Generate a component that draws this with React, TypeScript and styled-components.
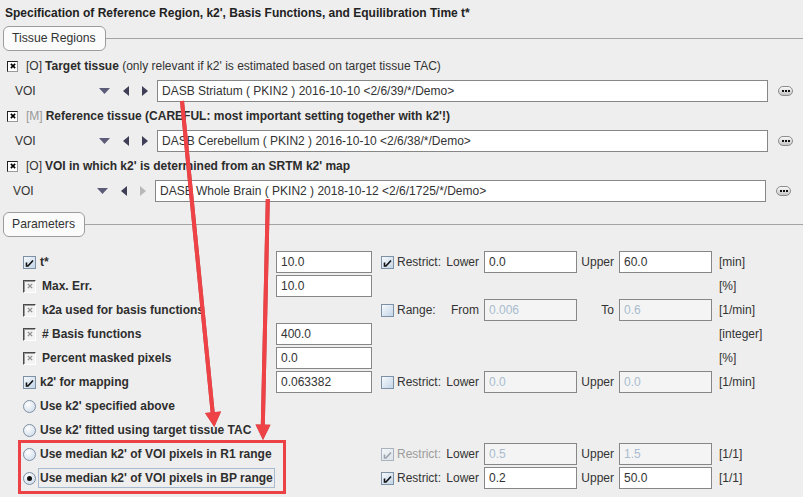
import React from 'react';
import styled, { createGlobalStyle, css } from 'styled-components';

type BoxKind = 'blue' | 'metal' | 'tissue' | 'faded';

const GlobalStyle = createGlobalStyle`
  html, body {
    margin: 0;
    padding: 0;
    background: #eeeeee;
  }
  body {
    font-family: "Liberation Sans", Arial, sans-serif;
    font-size: 12px;
    color: #333333;
  }
`;

const Page = styled.div`
  position: relative;
  width: 803px;
  height: 497px;
  overflow: hidden;
  background: #eeeeee;
`;

const Title = styled.div`
  height: 26px;
  line-height: 26px;
  padding-left: 5px;
  font-weight: bold;
  color: #222222;
  white-space: nowrap;
`;

const SectionHeader = styled.div<{ $top: number }>`
  display: flex;
  align-items: center;
  height: 25px;
  margin-top: ${(p) => p.$top}px;
  padding-left: 3px;
`;

const Tab = styled.div`
  box-sizing: border-box;
  height: 25px;
  line-height: 23px;
  padding: 0 9px 0 8px;
  border: 1px solid #9c9c9c;
  border-radius: 6px;
  background: #fbfbfb;
  font-size: 12.2px;
  color: #333333;
`;

const Rule = styled.div`
  flex: 1;
  height: 1px;
  background: #a4a4a4;
`;

const Section = styled.div<{ $top: number }>`
  display: flex;
  flex-direction: column;
  margin-top: ${(p) => p.$top}px;
`;

const LabelRow = styled.div`
  display: flex;
  align-items: center;
  height: 24px;
  padding-left: 7px;
  white-space: pre;
`;

const Tag = styled.span<{ $muted?: boolean }>`
  margin-left: 8px;
  margin-right: 3px;
  color: ${(p) => (p.$muted ? '#9a9a9a' : '#333333')};
`;

const Caption = styled.span`
  color: #333333;
`;

const Strong = styled.b`
  color: #2b2b2b;
`;

const VoiRow = styled.div<{ $inset: number }>`
  display: flex;
  align-items: center;
  height: 26px;
  padding-left: ${(p) => p.$inset}px;
`;

const VoiLabel = styled.span`
  width: 84px;
  flex: none;
`;

const Field = styled.div<{ $width: number; $disabled?: boolean }>`
  box-sizing: border-box;
  flex: none;
  width: ${(p) => p.$width}px;
  height: 22px;
  line-height: 20px;
  padding-left: 4px;
  border: 1px solid #878787;
  background: ${(p) => (p.$disabled ? '#f4f4f4' : '#ffffff')};
  color: ${(p) => (p.$disabled ? '#a9bccf' : '#333333')};
  white-space: nowrap;
  overflow: hidden;
`;

const IconSlot = styled.span<{ $w: number; $after: number }>`
  display: inline-flex;
  align-items: center;
  flex: none;
  width: ${(p) => p.$w}px;
  margin-right: ${(p) => p.$after}px;
`;

const DotsButton = styled.span`
  display: inline-flex;
  align-items: center;
  justify-content: center;
  gap: 1px;
  flex: none;
  box-sizing: border-box;
  width: 15px;
  height: 10px;
  margin-left: 10px;
  border: 1px solid #8c8c8c;
  border-radius: 5px;
  background: linear-gradient(#fafafa, #c4c4c4);
`;

const Dot = styled.span`
  width: 2px;
  height: 2px;
  background: #111111;
`;

const boxKinds = {
  blue: css`
    width: 13px;
    height: 13px;
    border: 1px solid #7d90a4;
    background: linear-gradient(135deg, #f6f9fc, #c3d5e8);
  `,
  metal: css`
    width: 13px;
    height: 13px;
    border: 1px solid;
    border-color: #4a4a4a #ffffff #ffffff #4a4a4a;
    box-shadow: inset 1px 1px 0 #9a9a9a;
    background: #f3f3f3;
  `,
  tissue: css`
    width: 11px;
    height: 11px;
    border: 1px solid;
    border-color: #222222 #9a9a9a #9a9a9a #222222;
    background: #ffffff;
  `,
  faded: css`
    width: 13px;
    height: 13px;
    border: 1px solid #a8b3be;
    background: linear-gradient(135deg, #f4f6f8, #dde3ea);
  `,
};

const Box = styled.span<{ $kind: BoxKind }>`
  display: inline-flex;
  align-items: center;
  justify-content: center;
  flex: none;
  box-sizing: border-box;
  ${(p) => boxKinds[p.$kind]}
`;

const Radio = styled.span<{ $on?: boolean }>`
  display: inline-flex;
  align-items: center;
  justify-content: center;
  flex: none;
  box-sizing: border-box;
  width: 13px;
  height: 13px;
  border: 1px solid #7d90a4;
  border-radius: 50%;
  background: radial-gradient(circle at 35% 30%, #ffffff, #c8d7e7);

  &::after {
    content: '';
    display: ${(p) => (p.$on ? 'block' : 'none')};
    width: 5px;
    height: 5px;
    border-radius: 50%;
    background: #111111;
  }
`;

const ParamList = styled.div`
  display: flex;
  flex-direction: column;
  margin-top: 13px;
`;

const ParamRow = styled.div`
  display: grid;
  grid-template-columns: 253px 105px 103px 93px 42px 93px auto;
  align-items: center;
  height: 24px;
  padding-left: 23px;
  white-space: nowrap;
`;

const LabelCell = styled.div<{ $gap: number }>`
  display: flex;
  align-items: center;
  gap: ${(p) => p.$gap}px;
  font-weight: bold;
  color: #2e2e2e;
`;

const Focus = styled.span`
  margin-left: -2px;
  padding: 2px 1px;
  line-height: 14px;
  border: 1px solid #a7bbd0;
`;

const OptionCell = styled.div`
  display: flex;
  align-items: center;
`;

const OptionText = styled.span<{ $faded?: boolean }>`
  margin-left: 3px;
  color: ${(p) => (p.$faded ? '#9c9c9c' : '#333333')};
`;

const BoundLabel = styled.span`
  margin-left: auto;
  padding-right: 5px;
  color: #333333;
`;

const Unit = styled.span`
  padding-left: 7px;
  color: #333333;
`;

const Highlight = styled.div`
  position: absolute;
  left: 18px;
  top: 440px;
  width: 268px;
  height: 54px;
  box-sizing: border-box;
  border: 3px solid #ec4145;
  pointer-events: none;
`;

const ArrowLayer = styled.svg`
  position: absolute;
  left: 0;
  top: 0;
  pointer-events: none;
  filter: drop-shadow(0 0 0.6px rgba(150, 20, 20, 0.7));
`;

const CheckMark = ({ color = '#111111' }: { color?: string }) => (
  <svg width="9" height="9" viewBox="0 0 9 9">
    <path d="M1.5 4.5 V8 H3 L8 2.5" fill="none" stroke={color} strokeWidth="1.6" />
  </svg>
);

const XMark = ({ color, size, weight }: { color: string; size: number; weight: number }) => (
  <svg width={size} height={size} viewBox="0 0 7 7">
    <path d="M1 1 L6 6 M6 1 L1 6" stroke={color} strokeWidth={weight} />
  </svg>
);

const TriangleDown = () => (
  <svg width="11" height="6" viewBox="0 0 11 6">
    <path d="M0 0 H11 L5.5 6 Z" fill="#5c5c78" />
  </svg>
);

const TriangleSide = ({ dir, muted }: { dir: 'left' | 'right'; muted?: boolean }) => (
  <svg width="6" height="10" viewBox="0 0 6 10">
    <path d={dir === 'left' ? 'M6 0 V10 L0 5 Z' : 'M0 0 V10 L6 5 Z'} fill={muted ? '#b8b8b8' : '#3e3e56'} />
  </svg>
);

const Check = ({ kind, checked }: { kind: BoxKind; checked: boolean }) => (
  <Box $kind={kind}>
    {checked && kind === 'blue' && <CheckMark />}
    {checked && kind === 'faded' && <CheckMark color="#9aa3ad" />}
    {checked && kind === 'metal' && <XMark color="#8c8c8c" size={6} weight={1.5} />}
    {checked && kind === 'tissue' && <XMark color="#000000" size={6} weight={1.8} />}
  </Box>
);

type Voi = { tag: string; muted?: boolean; title: string; note?: string; boldNote?: boolean; value: string; inset: number; lastMuted?: boolean };

const vois: Voi[] = [
  {
    tag: '[O]',
    title: 'Target tissue',
    note: ' (only relevant if k2\' is estimated based on target tissue TAC)',
    value: 'DASB Striatum ( PKIN2 ) 2016-10-10 <2/6/39/*/Demo>',
    inset: 15,
  },
  {
    tag: '[M]',
    muted: true,
    title: 'Reference tissue',
    note: ' (CAREFUL: most important setting together with k2\'!)',
    boldNote: true,
    value: 'DASB Cerebellum ( PKIN2 ) 2016-10-10 <2/6/38/*/Demo>',
    inset: 15,
  },
  {
    tag: '[O]',
    title: 'VOI in which k2\' is determined from an SRTM k2\' map',
    value: 'DASB Whole Brain ( PKIN2 ) 2018-10-12 <2/6/1725/*/Demo>',
    inset: 13,
    lastMuted: true,
  },
];

type Option = {
  kind: BoxKind;
  checked: boolean;
  text: string;
  faded?: boolean;
  loLabel: string;
  lo: string;
  hiLabel: string;
  hi: string;
  disabled?: boolean;
};

type Param = {
  radio?: boolean;
  on?: boolean;
  kind?: BoxKind;
  checked?: boolean;
  label: string;
  focus?: boolean;
  value?: string;
  option?: Option;
  unit?: string;
};

const params: Param[] = [
  {
    kind: 'blue',
    checked: true,
    label: 't*',
    value: '10.0',
    option: { kind: 'blue', checked: true, text: 'Restrict:', loLabel: 'Lower', lo: '0.0', hiLabel: 'Upper', hi: '60.0' },
    unit: '[min]',
  },
  { kind: 'metal', checked: true, label: 'Max. Err.', value: '10.0', unit: '[%]' },
  {
    kind: 'metal',
    checked: true,
    label: 'k2a used for basis functions',
    option: { kind: 'blue', checked: false, text: 'Range:', loLabel: 'From', lo: '0.006', hiLabel: 'To', hi: '0.6', disabled: true },
    unit: '[1/min]',
  },
  { kind: 'metal', checked: true, label: '# Basis functions', value: '400.0', unit: '[integer]' },
  { kind: 'metal', checked: true, label: 'Percent masked pixels', value: '0.0', unit: '[%]' },
  {
    kind: 'blue',
    checked: true,
    label: 'k2\' for mapping',
    value: '0.063382',
    option: { kind: 'blue', checked: false, text: 'Restrict:', loLabel: 'Lower', lo: '0.0', hiLabel: 'Upper', hi: '0.0', disabled: true },
    unit: '[1/min]',
  },
  { radio: true, label: 'Use k2\' specified above' },
  { radio: true, label: 'Use k2\' fitted using target tissue TAC' },
  {
    radio: true,
    label: 'Use median k2\' of VOI pixels in R1 range',
    option: { kind: 'faded', checked: true, faded: true, text: 'Restrict:', loLabel: 'Lower', lo: '0.5', hiLabel: 'Upper', hi: '1.5', disabled: true },
    unit: '[1/1]',
  },
  {
    radio: true,
    on: true,
    focus: true,
    label: 'Use median k2\' of VOI pixels in BP range',
    option: { kind: 'blue', checked: true, text: 'Restrict:', loLabel: 'Lower', lo: '0.2', hiLabel: 'Upper', hi: '50.0' },
    unit: '[1/1]',
  },
];

const App = () => {
  return (
    <Page>
      <GlobalStyle />
      <Title>Specification of Reference Region, k2', Basis Functions, and Equilibration Time t*</Title>

      <SectionHeader $top={0}>
        <Tab>Tissue Regions</Tab>
        <Rule />
      </SectionHeader>

      <Section $top={3}>
        {vois.map((v) => (
          <React.Fragment key={v.value}>
            <LabelRow>
              <Check kind="tissue" checked />
              <Tag $muted={v.muted}>{v.tag}</Tag>
              <Caption>
                <Strong>{v.title}</Strong>
                {v.note && (v.boldNote ? <Strong>{v.note}</Strong> : v.note)}
              </Caption>
            </LabelRow>
            <VoiRow $inset={v.inset}>
              <VoiLabel>VOI</VoiLabel>
              <IconSlot $w={12} $after={12}>
                <TriangleDown />
              </IconSlot>
              <IconSlot $w={6} $after={13}>
                <TriangleSide dir="left" />
              </IconSlot>
              <IconSlot $w={6} $after={9}>
                <TriangleSide dir="right" muted={v.lastMuted} />
              </IconSlot>
              <Field $width={611}>{v.value}</Field>
              <DotsButton>
                <Dot />
                <Dot />
                <Dot />
              </DotsButton>
            </VoiRow>
          </React.Fragment>
        ))}
      </Section>

      <SectionHeader $top={8}>
        <Tab>Parameters</Tab>
        <Rule />
      </SectionHeader>

      <ParamList>
        {params.map((p) => (
          <ParamRow key={p.label}>
            <LabelCell $gap={p.kind === 'metal' ? 6 : 4}>
              {p.radio ? <Radio $on={p.on} /> : <Check kind={p.kind ?? 'blue'} checked={!!p.checked} />}
              {p.focus ? <Focus>{p.label}</Focus> : <span>{p.label}</span>}
            </LabelCell>
            <div>{p.value && <Field $width={96}>{p.value}</Field>}</div>
            {p.option ? (
              <>
                <OptionCell>
                  <Check kind={p.option.kind} checked={p.option.checked} />
                  <OptionText $faded={p.option.faded}>{p.option.text}</OptionText>
                  <BoundLabel>{p.option.loLabel}</BoundLabel>
                </OptionCell>
                <Field $width={93} $disabled={p.option.disabled}>
                  {p.option.lo}
                </Field>
                <OptionCell>
                  <BoundLabel>{p.option.hiLabel}</BoundLabel>
                </OptionCell>
                <Field $width={93} $disabled={p.option.disabled}>
                  {p.option.hi}
                </Field>
              </>
            ) : (
              <>
                <div />
                <div />
                <div />
                <div />
              </>
            )}
            <Unit>{p.unit}</Unit>
          </ParamRow>
        ))}
      </ParamList>

      <Highlight />
      <ArrowLayer width="803" height="497" viewBox="0 0 803 497">
        <line x1="182" y1="101" x2="212.8" y2="414" stroke="#ee4246" strokeWidth="4" />
        <polygon points="205,413 221,411.4 214.3,427" fill="#ee4246" />
        <line x1="267.8" y1="199" x2="262.8" y2="426" stroke="#ee4246" strokeWidth="4" />
        <polygon points="255.5,424.5 270.5,424.8 263,440" fill="#ee4246" />
      </ArrowLayer>
    </Page>
  );
};

export default App;
